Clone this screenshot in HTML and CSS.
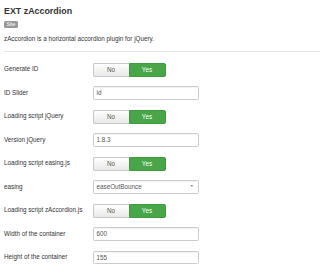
FILE: index.html
```html
<!DOCTYPE html>
<html>
<head>
<meta charset="utf-8">
<link rel="stylesheet" href="styles.css">
</head>
<body>
<div class="page">
  <h1 class="title">EXT zAccordion</h1>
  <span class="badge">Site</span>
  <p class="desc">zAccordion is a horizontal accordion plugin for jQuery.</p>
  <hr class="divider">
  <div class="form">
    <div class="row">
      <label class="label">Generate ID</label>
      <div class="toggle"><span class="no">No</span><span class="yes">Yes</span></div>
    </div>
    <div class="row">
      <label class="label">ID Slider</label>
      <div class="field">id</div>
    </div>
    <div class="row">
      <label class="label">Loading script jQuery</label>
      <div class="toggle"><span class="no">No</span><span class="yes">Yes</span></div>
    </div>
    <div class="row">
      <label class="label">Version jQuery</label>
      <div class="field">1.8.3</div>
    </div>
    <div class="row">
      <label class="label">Loading script easing.js</label>
      <div class="toggle"><span class="no">No</span><span class="yes">Yes</span></div>
    </div>
    <div class="row">
      <label class="label">easing</label>
      <div class="field select"><span>easeOutBounce</span><span class="arrow">&#9660;</span></div>
    </div>
    <div class="row">
      <label class="label">Loading script zAccordion.js</label>
      <div class="toggle"><span class="no">No</span><span class="yes">Yes</span></div>
    </div>
    <div class="row">
      <label class="label">Width of the container</label>
      <div class="field">600</div>
    </div>
    <div class="row">
      <label class="label">Height of the container</label>
      <div class="field">155</div>
    </div>
  </div>
</div>
</body>
</html>
```
FILE: styles.css
```css
html, body {
  margin: 0;
  padding: 0;
  background: #ffffff;
}
body {
  font-family: "Liberation Sans", Arial, sans-serif;
  color: #333333;
}
.page {
  padding-left: 4px;
  display: flex;
  flex-direction: column;
  align-items: flex-start;
}
.title {
  margin: 6px 0 0 0;
  font-size: 8.9px;
  line-height: 10px;
  font-weight: bold;
  color: #333333;
}
.badge {
  margin-top: 5px;
  background: #999999;
  color: #ffffff;
  font-size: 5px;
  line-height: 7px;
  height: 7px;
  padding: 0 2.6px;
  border-radius: 1.5px;
}
.desc {
  margin: 7.3px 0 0 0;
  font-size: 6.3px;
  line-height: 8px;
  color: #333333;
}
.divider {
  align-self: stretch;
  margin: 7.7px 0 0 0;
  border: 0;
  height: 1px;
  background: #e5e5e5;
}
.form {
  margin-top: 11px;
  align-self: stretch;
  display: flex;
  flex-direction: column;
}
.row {
  height: 23.5px;
  display: grid;
  grid-template-columns: 88.5px 1fr;
  align-items: start;
}
.label {
  padding-top: 2.3px;
  font-size: 6.3px;
  line-height: 8px;
  color: #333333;
  white-space: nowrap;
}
.toggle {
  display: flex;
  width: 73px;
  height: 14px;
  font-size: 6.3px;
  line-height: 12px;
  text-align: center;
}
.toggle .no {
  flex: 1;
  box-sizing: border-box;
  border: 1px solid #c8c8c8;
  border-right: 0;
  border-radius: 2px 0 0 2px;
  background: linear-gradient(#ffffff, #e8e8e8);
  color: #555555;
}
.toggle .yes {
  flex: 1;
  box-sizing: border-box;
  border: 1px solid #3f9a3f;
  border-radius: 0 2px 2px 0;
  background: #48a648;
  color: #ffffff;
}
.field {
  box-sizing: border-box;
  width: 106px;
  height: 13.5px;
  border: 1px solid #cccccc;
  border-radius: 1.5px;
  padding: 0 3px;
  font-size: 6.3px;
  line-height: 11.5px;
  color: #555555;
  box-shadow: inset 0 1px 1px rgba(0,0,0,0.05);
}
.select {
  display: flex;
  justify-content: space-between;
  align-items: center;
  background: #ffffff;
}
.arrow {
  font-size: 3.5px;
  color: #777777;
  padding-right: 1px;
}
```
